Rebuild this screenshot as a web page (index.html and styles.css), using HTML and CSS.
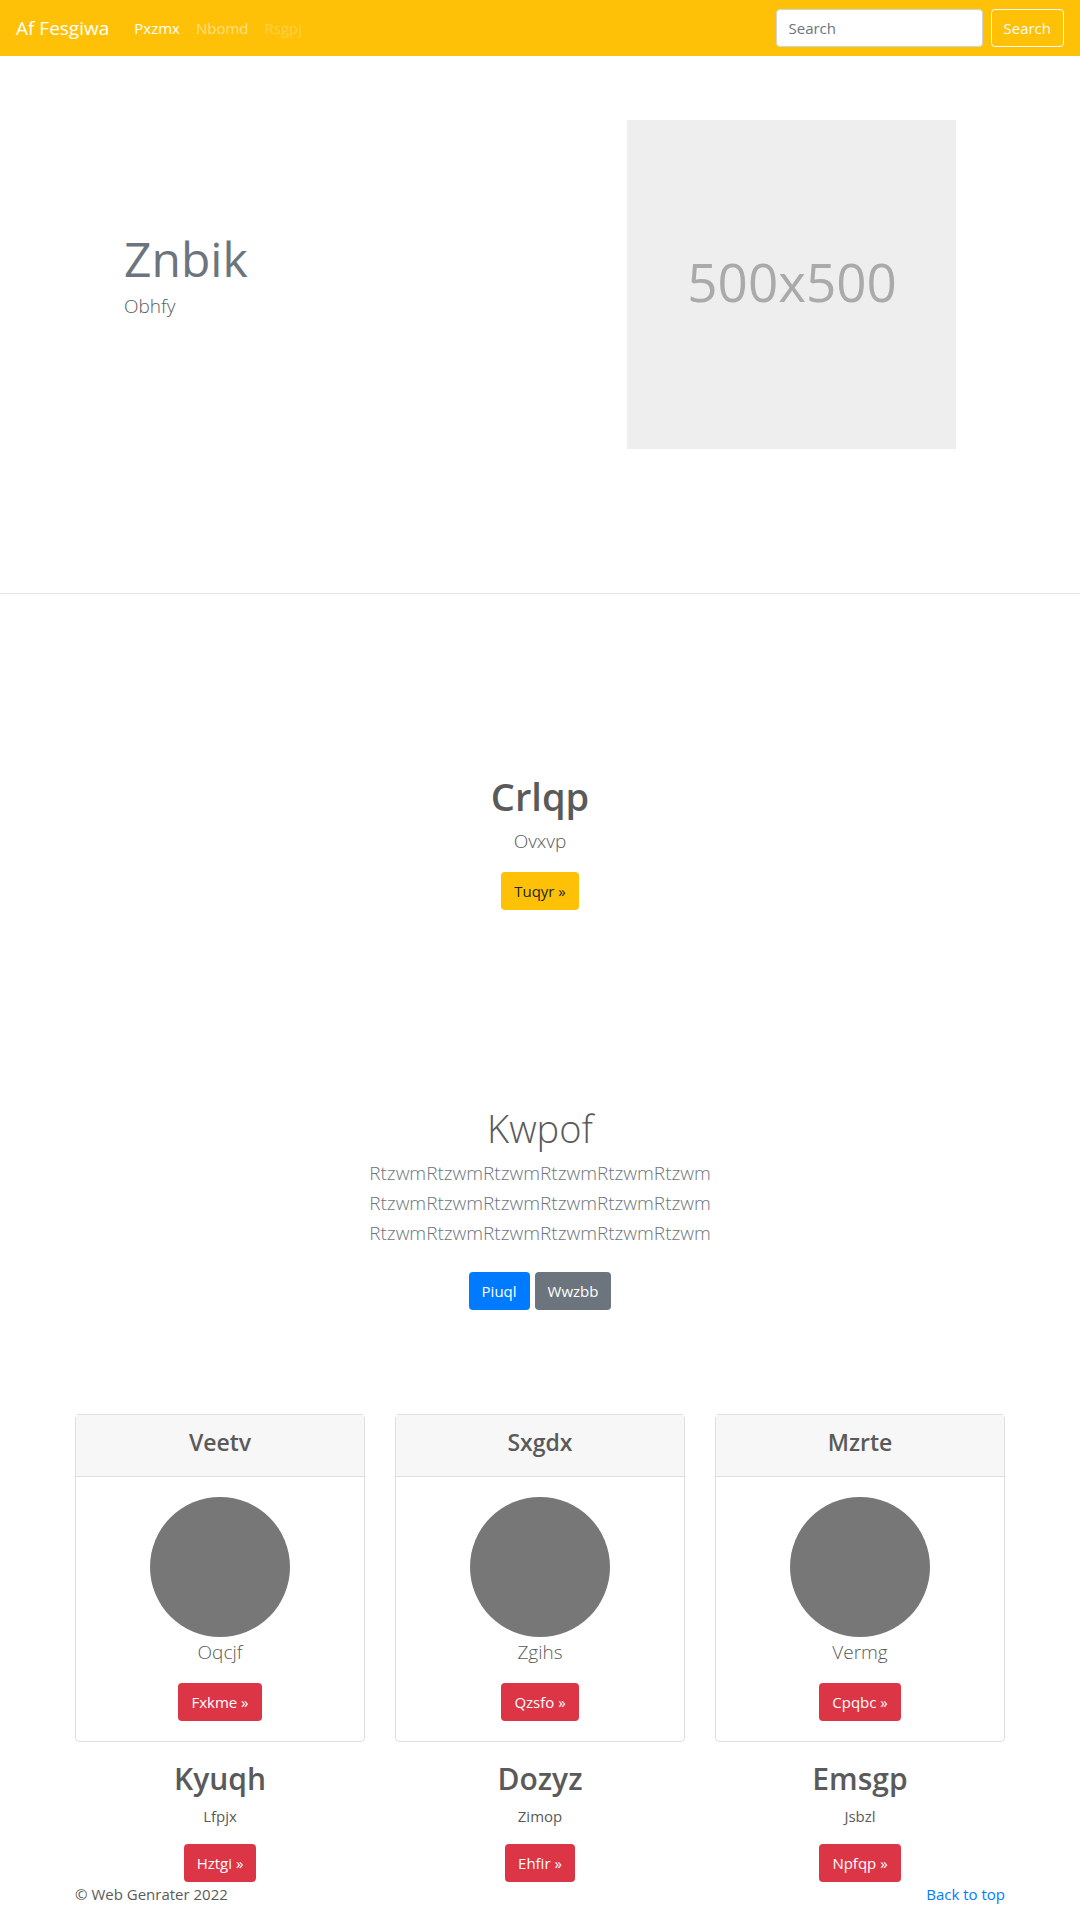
FILE: index.html
```html
<!DOCTYPE html>
<html lang="en">
<head>
<meta charset="utf-8">
<meta name="viewport" content="width=device-width, initial-scale=1">
<title>Af Fesgiwa</title>
<link rel="stylesheet" href="styles.css">
</head>
<body id="top">
<header class="navbar">
  <a class="brand" href="#">Af Fesgiwa</a>
  <nav class="nav">
    <a class="nav-link active" href="#">Pxzmx</a>
    <a class="nav-link" href="#">Nbomd</a>
    <a class="nav-link disabled" href="#" aria-disabled="true">Rsgpj</a>
  </nav>
  <form class="search">
    <input class="search-input" type="search" placeholder="Search" aria-label="Search">
    <button class="btn btn-outline" type="submit">Search</button>
  </form>
</header>
<main>
  <section class="hero">
    <div class="hero-text">
      <h2 class="hero-title">Znbik</h2>
      <p class="lead">Obhfy</p>
    </div>
    <svg class="hero-image" viewBox="0 0 329 329" role="img" aria-label="500x500">
      <rect width="329" height="329" fill="#eee"/>
      <text class="hero-image-text" x="165" y="182" text-anchor="middle">500x500</text>
    </svg>
  </section>

  <section class="feature">
    <h1 class="title">Crlqp</h1>
    <p class="lead">Ovxvp</p>
    <a class="btn btn-warning" href="#">Tuqyr »</a>
  </section>

  <section class="intro">
    <h1 class="title title-light">Kwpof</h1>
    <p class="lead muted">RtzwmRtzwmRtzwmRtzwmRtzwmRtzwm<br>RtzwmRtzwmRtzwmRtzwmRtzwmRtzwm<br>RtzwmRtzwmRtzwmRtzwmRtzwmRtzwm</p>
    <div class="actions">
      <a class="btn btn-primary" href="#">Piuql</a>
      <a class="btn btn-secondary" href="#">Wwzbb</a>
    </div>
  </section>

  <section class="container columns">
    <article class="card">
      <h4 class="card-header">Veetv</h4>
      <div class="card-body">
        <div class="avatar"></div>
        <p class="lead">Oqcjf</p>
        <a class="btn btn-danger" href="#">Fxkme »</a>
      </div>
    </article>
    <article class="card">
      <h4 class="card-header">Sxgdx</h4>
      <div class="card-body">
        <div class="avatar"></div>
        <p class="lead">Zgihs</p>
        <a class="btn btn-danger" href="#">Qzsfo »</a>
      </div>
    </article>
    <article class="card">
      <h4 class="card-header">Mzrte</h4>
      <div class="card-body">
        <div class="avatar"></div>
        <p class="lead">Vermg</p>
        <a class="btn btn-danger" href="#">Cpqbc »</a>
      </div>
    </article>
    <article class="blurb">
      <h2 class="blurb-title">Kyuqh</h2>
      <p class="text">Lfpjx</p>
      <a class="btn btn-danger" href="#">Hztgi »</a>
    </article>
    <article class="blurb">
      <h2 class="blurb-title">Dozyz</h2>
      <p class="text">Zimop</p>
      <a class="btn btn-danger" href="#">Ehfir »</a>
    </article>
    <article class="blurb">
      <h2 class="blurb-title">Emsgp</h2>
      <p class="text">Jsbzl</p>
      <a class="btn btn-danger" href="#">Npfqp »</a>
    </article>
  </section>
</main>
<footer class="container footer">
  <span>© Web Genrater 2022</span>
  <a class="top-link" href="#top">Back to top</a>
</footer>
</body>
</html>
```
FILE: styles.css
```css
* { box-sizing: border-box; }

body {
  margin: 0;
  background: #fff;
  color: #5a5a5a;
  font-family: "Open Sans", "Noto Sans", sans-serif;
  font-size: 15px;
  line-height: 24px;
}

h1, h2, h4, p { margin: 0; }
a { text-decoration: none; }

.navbar {
  display: flex;
  align-items: center;
  min-height: 56px;
  padding: 8px 16px;
  background: #ffc107;
}
.brand { margin-right: 17px; color: #fff; font-size: 19px; line-height: 30px; }
.nav { display: flex; flex: 1; }
.nav-link { padding: 8px; color: rgba(255, 255, 255, .5); }
.nav-link.active { color: #fff; }
.nav-link.disabled { color: rgba(255, 255, 255, .25); }
.search { display: flex; gap: 8px; }
.search-input {
  width: 207px;
  height: 38px;
  padding: 6px 12px;
  border: 1px solid #ced4da;
  border-radius: 4px;
  background: #fff;
  color: #495057;
  font: inherit;
}
.search-input::placeholder { color: #6c757d; opacity: 1; }

.btn {
  display: inline-block;
  padding: 6px 12px;
  border: 1px solid transparent;
  border-radius: 4px;
  color: #fff;
  font: inherit;
}
.btn-outline { border-color: #f8f9fa; background: transparent; color: #f8f9fa; }
.btn-warning { background: #ffc107; color: #212529; }
.btn-primary { background: #007bff; }
.btn-secondary { background: #6c757d; }
.btn-danger { background: #dc3545; }

.lead { margin-bottom: 16px; font-size: 19px; font-weight: 300; line-height: 30px; }
.muted { color: #6c757d; }

.hero {
  display: grid;
  grid-template-columns: 7fr 5fr;
  align-items: center;
  padding: 64px 109px 144px;
  border-bottom: 1px solid #e5e5e5;
}
.hero-text, .hero-image { margin: 0 15px; }
.hero-title { margin-bottom: 6px; color: #6c757d; font-size: 48px; font-weight: 400; line-height: 52px; }
.hero-image { display: block; }
.hero-image-text { fill: #aaa; font-size: 53px; }

.feature, .intro { text-align: center; }
.feature { padding: 176px 16px 96px; }
.intro { padding: 96px 16px; }
.title { margin-bottom: 4px; font-size: 38px; font-weight: 600; line-height: 52px; }
.title-light { font-weight: 300; }
.actions { display: flex; justify-content: center; gap: 5px; padding: 8px 0; }

.container { margin: 0 75px; }
.columns {
  display: grid;
  grid-template-columns: repeat(3, 1fr);
  gap: 16px 30px;
  text-align: center;
}
.card { border: 1px solid #dfdfdf; border-radius: 4px; }
.card-header {
  padding: 13px 20px 19px;
  border-bottom: 1px solid #dfdfdf;
  background: #f7f7f7;
  font-size: 23px;
  font-weight: 600;
  line-height: 29px;
}
.card-body { padding: 20px; }
.avatar { width: 140px; height: 140px; margin: 0 auto; border-radius: 50%; background: #777; }
.blurb-title { margin-bottom: 4px; font-size: 30px; font-weight: 600; line-height: 42px; }
.text { margin-bottom: 16px; }

.footer { display: flex; justify-content: space-between; }
.top-link { color: #007bff; }
```
